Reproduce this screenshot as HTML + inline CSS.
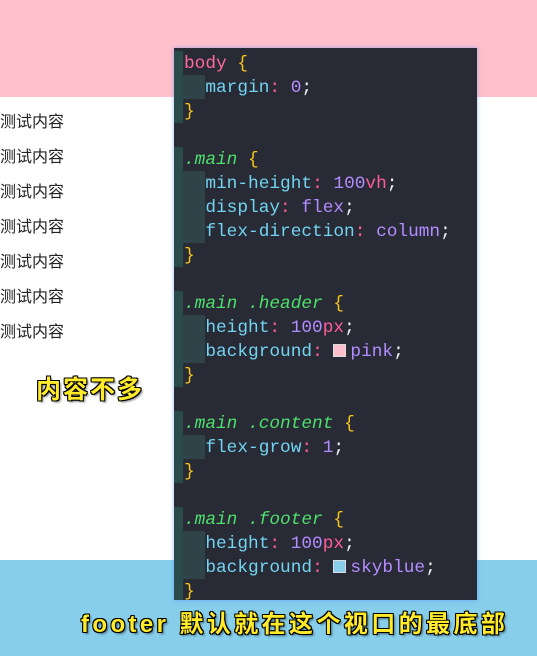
<!DOCTYPE html>
<html><head><meta charset="utf-8"><style>
*{margin:0;padding:0;box-sizing:border-box}
body{width:537px;height:656px;position:relative;background:#fff;overflow:hidden;font-family:"Liberation Sans","Noto Sans CJK SC",sans-serif}
.hd{position:absolute;left:0;top:0;width:537px;height:97px;background:#ffc0cb}
.ft{position:absolute;left:0;top:560px;width:537px;height:96px;background:#87ceeb}
.t{position:absolute;left:0;font-size:16px;color:#222;line-height:20px}
.panel{position:absolute;left:174px;top:48px;width:303px;height:552px;background:#282a36;box-shadow:0 0 4px rgba(80,140,255,.6)}
.g{position:absolute;left:0;width:9px;background:#2a4b4c}
.ind{position:absolute;left:9px;width:22px;background:#2e4449}
.code{position:absolute;left:10px;top:4px;font-family:"Liberation Mono",monospace;font-size:17.8px;line-height:24px;white-space:pre;color:#eee}
.p{color:#72d4f0}.c{color:#ff5c8a}.n{color:#b48cff}.u{color:#ff5c9a}.s{color:#4ee06a;font-style:italic}.b{color:#f5c518}.k{color:#ff6a9a}.w{color:#f0f0f0}
.sw{display:inline-block;width:13px;height:13px;vertical-align:-1px;border:1px solid #ddd;margin-right:4px}
.cap{position:absolute;color:#ffeb2a;font-weight:bold;text-shadow:1px 1px 0 #000,-1px -1px 0 #000,1px -1px 0 #000,-1px 1px 0 #000,0 1px 0 #000,0 -1px 0 #000,1px 0 0 #000,-1px 0 0 #000,2px 2px 2px rgba(0,0,0,.5);font-family:"Liberation Sans","Noto Sans CJK SC",sans-serif}
</style></head><body>
<div class="hd"></div><div class="ft"></div>
<div class="t" style="top:113px">测试内容</div>
<div class="t" style="top:148px">测试内容</div>
<div class="t" style="top:183px">测试内容</div>
<div class="t" style="top:218px">测试内容</div>
<div class="t" style="top:253px">测试内容</div>
<div class="t" style="top:288px">测试内容</div>
<div class="t" style="top:323px">测试内容</div>
<div class="cap" style="left:36px;top:370px;font-size:25px;letter-spacing:2px">内容不多</div>
<div class="panel">
<div class="g" style="top:3px;height:72px"></div><div class="ind" style="top:27px;height:24px"></div>
<div class="g" style="top:99px;height:120px"></div><div class="ind" style="top:123px;height:72px"></div>
<div class="g" style="top:243px;height:96px"></div><div class="ind" style="top:267px;height:48px"></div>
<div class="g" style="top:363px;height:72px"></div><div class="ind" style="top:387px;height:24px"></div>
<div class="g" style="top:459px;height:93px"></div><div class="ind" style="top:483px;height:48px"></div>
<div class="code"><span class="k">body</span> <span class="b">{</span>
  <span class="p">margin</span><span class="c">:</span> <span class="n">0</span><span class="w">;</span>
<span class="b">}</span>

<span class="s">.main</span> <span class="b">{</span>
  <span class="p">min-height</span><span class="c">:</span> <span class="n">100</span><span class="u">vh</span><span class="w">;</span>
  <span class="p">display</span><span class="c">:</span> <span class="n">flex</span><span class="w">;</span>
  <span class="p">flex-direction</span><span class="c">:</span> <span class="n">column</span><span class="w">;</span>
<span class="b">}</span>

<span class="s">.main .header</span> <span class="b">{</span>
  <span class="p">height</span><span class="c">:</span> <span class="n">100</span><span class="u">px</span><span class="w">;</span>
  <span class="p">background</span><span class="c">:</span> <span class="sw" style="background:#ffc0cb"></span><span class="n">pink</span><span class="w">;</span>
<span class="b">}</span>

<span class="s">.main .content</span> <span class="b">{</span>
  <span class="p">flex-grow</span><span class="c">:</span> <span class="n">1</span><span class="w">;</span>
<span class="b">}</span>

<span class="s">.main .footer</span> <span class="b">{</span>
  <span class="p">height</span><span class="c">:</span> <span class="n">100</span><span class="u">px</span><span class="w">;</span>
  <span class="p">background</span><span class="c">:</span> <span class="sw" style="background:#87ceeb"></span><span class="n">skyblue</span><span class="w">;</span>
<span class="b">}</span></div>
</div>
<div class="cap" style="left:81px;top:604px;font-size:24px;letter-spacing:3.4px">footer 默认就在这个视口的最底部</div>
</body></html>
